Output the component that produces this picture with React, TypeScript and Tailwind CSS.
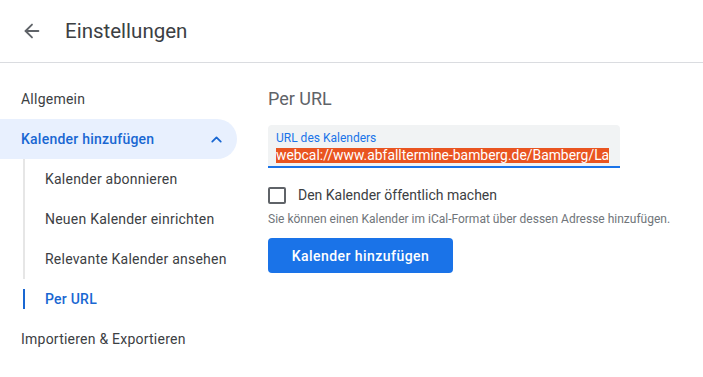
import React from "react";
import { ArrowLeft, ChevronUp } from "lucide-react";

const subItems = [
  "Kalender abonnieren",
  "Neuen Kalender einrichten",
  "Relevante Kalender ansehen",
];

const App: React.FC = () => {
  return (
    <div className="h-[377px] w-[703px] overflow-hidden bg-white font-['Roboto',sans-serif] text-[#3c4043]">
      <header className="flex h-[63px] items-center border-b border-[#dadce0] pb-px">
        <div className="flex w-[65px] justify-center pr-[2px]">
          <ArrowLeft className="h-[22px] w-[22px] text-[#5f6368]" strokeWidth={2} />
        </div>
        <h1 className="text-[20.5px] leading-[28px] text-[#3c4043]">Einstellungen</h1>
      </header>

      <div className="flex pt-4">
        <nav className="w-[237px] text-sm tracking-[0.23px]">
          <div className="flex h-10 items-center pl-[21px]">Allgemein</div>
          <div className="flex h-10 items-center justify-between rounded-r-full bg-[#e8f0fe] pl-[21px] pr-[12px] font-medium text-[#1967d2]">
            <span>Kalender hinzufügen</span>
            <ChevronUp className="h-[17px] w-[17px]" strokeWidth={2.5} />
          </div>
          <div className="ml-[23px]">
            <div className="border-l-2 border-[#e6e6e6]">
              {subItems.map((item) => (
                <div key={item} className="flex h-10 items-center pl-[20px]">
                  {item}
                </div>
              ))}
            </div>
            <div className="flex h-10 items-center">
              <div className="h-5 w-[2px] bg-[#1967d2]" />
              <span className="pl-[20px] font-medium text-[#1967d2]">Per URL</span>
            </div>
          </div>
          <div className="flex h-10 items-center pl-[21px]">Importieren &amp; Exportieren</div>
        </nav>

        <main className="ml-[31px] flex w-[352px] flex-col">
          <h2 className="flex h-10 items-center text-lg text-[#5f6368]">Per URL</h2>
          <div className="mt-[6px] flex h-[43px] flex-col rounded-t border-b-2 border-[#1a73e8] bg-[#f1f3f4] px-2 pt-[6px]">
            <span className="text-xs leading-[14px] text-[#1a73e8]">URL des Kalenders</span>
            <div className="mt-[3px] flex overflow-hidden whitespace-nowrap">
              <span className="bg-[#e95420] text-[13.9px] leading-[15px] text-white">
                webcal://www.abfalltermine-bamberg.de/Bamberg/La
              </span>
            </div>
          </div>
          <label className="mt-[17px] flex items-center gap-3 text-sm">
            <span className="h-[17px] w-[18px] rounded-[2px] border-2 border-[#5f6368]" />
            <span>Den Kalender öffentlich machen</span>
          </label>
          <p className="mt-[6px] whitespace-nowrap text-xs text-[#70757a]">
            Sie können einen Kalender im iCal-Format über dessen Adresse hinzufügen.
          </p>
          <button className="mt-[11px] h-[35px] w-[185px] rounded bg-[#1a73e8] text-sm font-medium tracking-[0.45px] text-white">
            Kalender hinzufügen
          </button>
        </main>
      </div>
    </div>
  );
};

export default App;
